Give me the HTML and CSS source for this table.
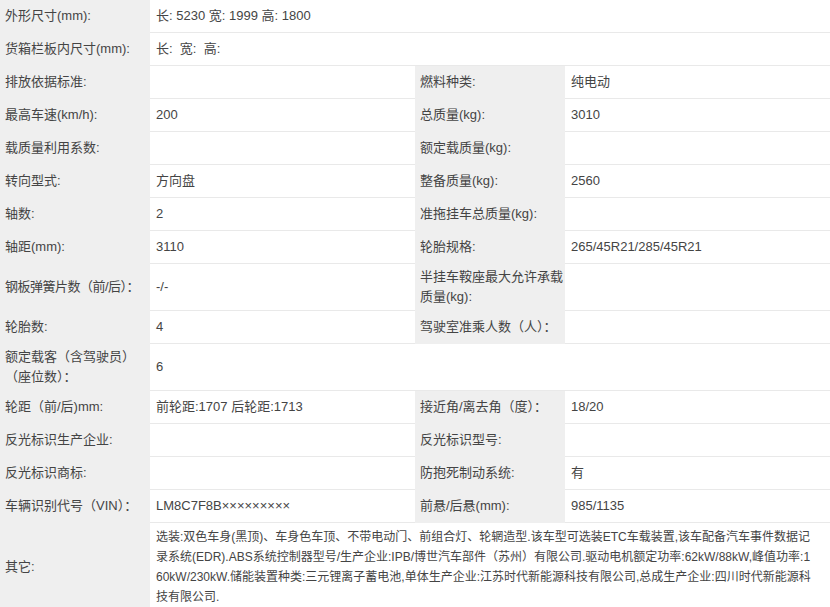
FILE: index.html
```html
<!DOCTYPE html>
<html lang="zh-CN">
<head>
<meta charset="utf-8">
<title>车辆参数</title>
<link rel="stylesheet" href="styles.css">
</head>
<body>
<div class="sheet">
  <div class="k">外形尺寸(mm):</div><div class="v wide">长: 5230 宽: 1999 高: 1800</div>
  <div class="k">货箱栏板内尺寸(mm):</div><div class="v wide">长:&nbsp; 宽:&nbsp; 高:</div>
  <div class="k">排放依据标准:</div><div class="v"></div><div class="k">燃料种类:</div><div class="v">纯电动</div>
  <div class="k">最高车速(km/h):</div><div class="v">200</div><div class="k">总质量(kg):</div><div class="v">3010</div>
  <div class="k">载质量利用系数:</div><div class="v"></div><div class="k">额定载质量(kg):</div><div class="v"></div>
  <div class="k">转向型式:</div><div class="v">方向盘</div><div class="k">整备质量(kg):</div><div class="v">2560</div>
  <div class="k">轴数:</div><div class="v">2</div><div class="k">准拖挂车总质量(kg):</div><div class="v"></div>
  <div class="k">轴距(mm):</div><div class="v">3110</div><div class="k">轮胎规格:</div><div class="v">265/45R21/285/45R21</div>
  <div class="k tight">钢板弹簧片数（前/后）：</div><div class="v">-/-</div><div class="k">半挂车鞍座最大允许承载质量(kg):</div><div class="v"></div>
  <div class="k">轮胎数:</div><div class="v">4</div><div class="k">驾驶室准乘人数（人）：</div><div class="v"></div>
  <div class="k">额定载客（含驾驶员）（座位数）：</div><div class="v wide">6</div>
  <div class="k">轮距（前/后)mm:</div><div class="v">前轮距:1707 后轮距:1713</div><div class="k">接近角/离去角（度）：</div><div class="v">18/20</div>
  <div class="k">反光标识生产企业:</div><div class="v"></div><div class="k">反光标识型号:</div><div class="v"></div>
  <div class="k">反光标识商标:</div><div class="v"></div><div class="k">防抱死制动系统:</div><div class="v">有</div>
  <div class="k">车辆识别代号（VIN）：</div><div class="v">LM8C7F8B×××××××××</div><div class="k">前悬/后悬(mm):</div><div class="v">985/1135</div>
  <div class="k">其它:</div><div class="v wide long">选装:双色车身(黑顶)、车身色车顶、不带电动门、前组合灯、轮辋造型.该车型可选装ETC车载装置,该车配备汽车事件数据记<br>录系统(EDR).ABS系统控制器型号/生产企业:IPB/博世汽车部件（苏州）有限公司.驱动电机额定功率:62kW/88kW,峰值功率:1<br>60kW/230kW.储能装置种类:三元锂离子蓄电池,单体生产企业:江苏时代新能源科技有限公司,总成生产企业:四川时代新能源科<br>技有限公司.</div>
</div>
</body>
</html>
```

FILE: styles.css
```css
html, body {
  margin: 0;
  padding: 0;
  background: #fff;
}
body {
  font-family: "Liberation Sans", "Noto Sans CJK SC", sans-serif;
  font-size: 13px;
  color: #444;
}
.sheet {
  display: grid;
  grid-template-columns: 150px 265px 150px 265px;
  width: 830px;
}
.k, .v {
  box-sizing: border-box;
  min-height: 33px;
  padding: 3px 5px;
  line-height: 20px;
  display: flex;
  align-items: center;
  border-bottom: 1px solid #e9e9e9;
}
.k {
  background: #efefef;
  border-bottom-color: #efefef;
  padding-right: 1px;
}
.tight {
  letter-spacing: -0.5px;
  white-space: nowrap;
}
.v {
  background: #fff;
  padding-left: 6px;
}
.wide {
  grid-column: span 3;
}
.long {
  display: block;
  font-size: 12px;
  line-height: 20px;
  padding-top: 4px;
  white-space: nowrap;
}
```
